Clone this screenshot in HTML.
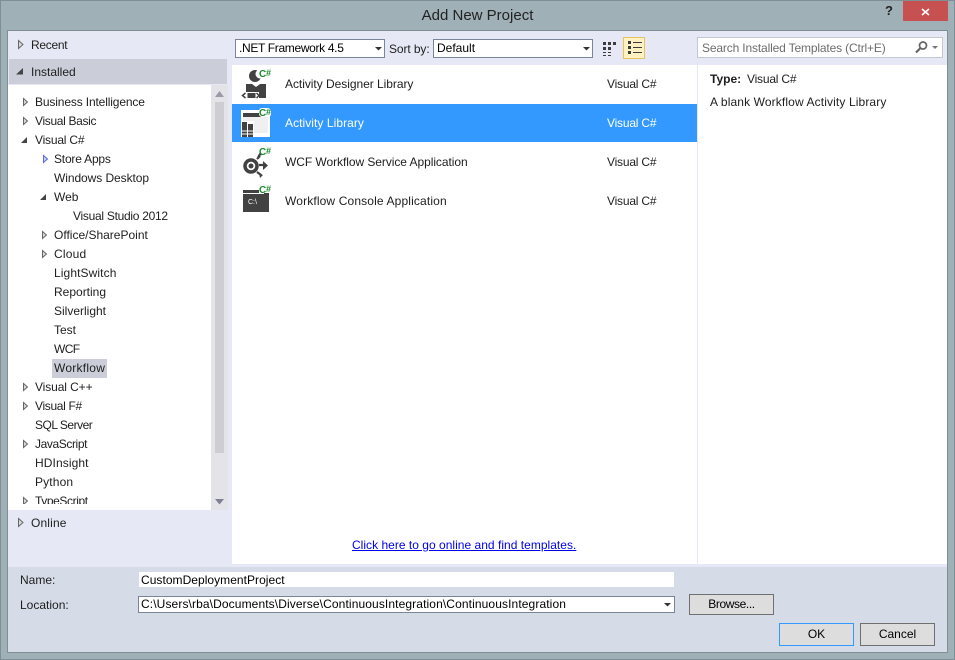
<!DOCTYPE html>
<html><head><meta charset="utf-8"><style>
html,body{margin:0;padding:0;background:#9fb0b7}
#r{position:relative;width:955px;height:660px;overflow:hidden;background:#9fb0b7;font-family:"Liberation Sans",sans-serif;font-size:12px;color:#1e1e1e}
#r div,#r svg{position:absolute}
.t{white-space:nowrap;line-height:16px;height:16px}
.box{background:#fff;border:1px solid #7b8598;box-sizing:border-box}
.btn{background:#dddddd;border:1px solid #707070;box-sizing:border-box;text-align:center;color:#000}
.g{font-family:"Liberation Sans",sans-serif;font-weight:bold;fill:#1e8a2d}
</style></head><body><div id="r">
<div style="left:0;top:0;width:955px;height:1px;background:#7f8f96"></div>
<div style="left:0;top:0;width:1px;height:660px;background:#7f8f96"></div>
<div style="left:954px;top:0;width:1px;height:660px;background:#7f8f96"></div>
<div style="left:0;top:659px;width:955px;height:1px;background:#7f8f96"></div>
<div class="t" style="left:0;width:955px;top:8px;text-align:center;font-size:15px;color:#222">Add New Project</div>
<div class="t" style="left:885px;top:3px;font-weight:bold;font-size:13px;color:#222">?</div>
<div style="left:903px;top:1px;width:45px;height:20px;background:#c75050"></div>
<svg style="left:903px;top:1px" width="45" height="20"><path d="M19 8l7 6M26 8l-7 6" stroke="#fff" stroke-width="1.600"/></svg>

<div style="left:7px;top:30px;width:941px;height:623px;background:#7f8f96"></div>
<div style="left:8px;top:31px;width:939px;height:621px;background:#e6e9f5"></div>
<div style="left:8px;top:567px;width:939px;height:85px;background:#d6dbe8"></div>

<div style="left:9px;top:59px;width:218px;height:25px;background:#cbced9"></div>
<div style="left:8px;top:85px;width:203px;height:425px;background:#fff;overflow:hidden">
<div class="t" style="left:27px;top:9px;letter-spacing:-.14px">Business Intelligence</div>
<div class="t" style="left:27px;top:28px;letter-spacing:-.33px">Visual Basic</div>
<div class="t" style="left:27px;top:47px;letter-spacing:-.2px">Visual C#</div>
<div class="t" style="left:46px;top:66px;letter-spacing:-.2px">Store Apps</div>
<div class="t" style="left:46px;top:85px;letter-spacing:-.07px">Windows Desktop</div>
<div class="t" style="left:46px;top:104px">Web</div>
<div class="t" style="left:65px;top:123px;letter-spacing:-.28px">Visual Studio 2012</div>
<div class="t" style="left:46px;top:142px">Office/SharePoint</div>
<div class="t" style="left:46px;top:161px;letter-spacing:.2px">Cloud</div>
<div class="t" style="left:46px;top:180px;letter-spacing:.1px">LightSwitch</div>
<div class="t" style="left:46px;top:199px">Reporting</div>
<div class="t" style="left:46px;top:218px">Silverlight</div>
<div class="t" style="left:46px;top:237px">Test</div>
<div class="t" style="left:46px;top:256px;letter-spacing:-.6px">WCF</div>
<div style="left:44px;top:274px;width:55px;height:19px;background:#cbced9"></div>
<div class="t" style="left:46px;top:275px;letter-spacing:.25px">Workflow</div>
<div class="t" style="left:27px;top:294px;letter-spacing:-.1px">Visual C++</div>
<div class="t" style="left:27px;top:313px;letter-spacing:-.33px">Visual F#</div>
<div class="t" style="left:27px;top:332px;letter-spacing:-.5px">SQL Server</div>
<div class="t" style="left:27px;top:351px;letter-spacing:-.4px">JavaScript</div>
<div class="t" style="left:27px;top:370px;letter-spacing:.1px">HDInsight</div>
<div class="t" style="left:27px;top:389px;letter-spacing:.15px">Python</div>
<div class="t" style="left:27px;top:408px;letter-spacing:-.4px">TypeScript</div>
</div>
<div class="t" style="left:31px;top:37px;letter-spacing:-.3px">Recent</div>
<div class="t" style="left:31px;top:64px">Installed</div>
<div class="t" style="left:31px;top:515px;letter-spacing:.15px">Online</div>

<svg style="left:0;top:0" width="232" height="535" fill="#d8d8d8" stroke="#666">
<path d="M18.500 40.500l4.500 4-4.500 4z"/>
<path d="M16 74.500l7-6.500v6.500z" fill="#444" stroke="none"/>
<path d="M18.500 518.500l4.500 4-4.500 4z"/>
<path d="M23.500 98.500l4 3.500-4 3.500z"/>
<path d="M23.500 117.500l4 3.500-4 3.500z"/>
<path d="M21 143l6-6v6z" fill="#444" stroke="none"/>
<path d="M43.500 155.500l4 3.500-4 3.500z" stroke="#5a6ad8" fill="#c8d0f8"/>
<path d="M40 200l6-6v6z" fill="#444" stroke="none"/>
<path d="M42.500 231.500l4 3.500-4 3.500z"/>
<path d="M42.500 250.500l4 3.500-4 3.500z"/>
<path d="M23.500 383.500l4 3.500-4 3.500z"/>
<path d="M23.500 402.500l4 3.500-4 3.500z"/>
<path d="M23.500 440.500l4 3.500-4 3.500z"/>
<path d="M23.500 497.500l4 3.500-4 3.500z"/>
</svg>
<div style="left:8px;top:504px;width:203px;height:6px;background:#fff"></div>

<div style="left:211px;top:85px;width:17px;height:425px;background:#e4e4e8"></div>
<div style="left:215px;top:102px;width:9px;height:351px;background:#cdcdd2"></div>
<svg style="left:211px;top:85px" width="16" height="425"><path d="M4 12l4.500-6 4.500 6z" fill="#9a9aa8"/><path d="M4 414h9l-4.500 5.500z" fill="#7f7f95"/></svg>

<div class="box" style="left:235px;top:39px;width:150px;height:19px;padding-left:3px;line-height:17px;color:#000;letter-spacing:-.33px">.NET Framework 4.5</div>
<svg style="left:375px;top:46px" width="7" height="5"><path d="M0 1h7l-3.500 3.500z" fill="#333"/></svg>
<div class="t" style="left:389px;top:41px;letter-spacing:-.1px">Sort by:</div>
<div class="box" style="left:433px;top:39px;width:160px;height:19px;padding-left:3px;line-height:17px;color:#000">Default</div>
<svg style="left:583px;top:46px" width="7" height="5"><path d="M0 1h7l-3.500 3.500z" fill="#333"/></svg>

<svg style="left:602px;top:41px" width="16" height="16">
<g fill="#3c3c3c"><rect x="1" y="1" width="3" height="3"/><rect x="6" y="1" width="3" height="3"/><rect x="11" y="1" width="3" height="3"/><rect x="1" y="6" width="3" height="3"/><rect x="6" y="6" width="3" height="3"/><rect x="1" y="11" width="3" height="1"/><rect x="6" y="11" width="3" height="1"/><rect x="1" y="14" width="3" height="1"/><rect x="6" y="14" width="3" height="1"/></g></svg>
<div style="left:623px;top:37px;width:22px;height:22px;box-sizing:border-box;background:#fff2c0;border:1px solid #e5c365"></div>
<svg style="left:626px;top:40px" width="16" height="16"><g fill="#3c3c3c"><rect x="2" y="1" width="3" height="3"/><rect x="2" y="6" width="3" height="3"/><rect x="2" y="11" width="3" height="3"/><rect x="7" y="2" width="9" height="1"/><rect x="7" y="7" width="9" height="1"/><rect x="7" y="12" width="9" height="1"/></g></svg>

<div style="left:697px;top:37px;width:246px;height:21px;box-sizing:border-box;background:#fff;border:1px solid #c3c8d4"></div>
<div class="t" style="left:702px;top:40px;color:#6d6d6d;letter-spacing:-.15px">Search Installed Templates (Ctrl+E)</div>
<svg style="left:914px;top:40px" width="26" height="15" fill="none"><circle cx="9" cy="5.500" r="3.500" stroke="#666" stroke-width="1.700"/><path d="M6.500 8L2 12.500" stroke="#666" stroke-width="2.200"/><path d="M18 6h6l-3 3z" fill="#777"/></svg>

<div style="left:232px;top:65px;width:465px;height:499px;background:#fff"></div>
<div style="left:698px;top:65px;width:249px;height:499px;background:#fff"></div>
<div style="left:232px;top:104px;width:465px;height:38px;background:#3399ff"></div>

<div class="t" style="left:285px;top:76px;letter-spacing:-.04px">Activity Designer Library</div>
<div class="t" style="left:607px;top:76px;letter-spacing:-.2px">Visual C#</div>
<div class="t" style="left:285px;top:115px;color:#fff;letter-spacing:.06px">Activity Library</div>
<div class="t" style="left:607px;top:115px;color:#fff;letter-spacing:-.2px">Visual C#</div>
<div class="t" style="left:285px;top:154px;letter-spacing:-.06px">WCF Workflow Service Application</div>
<div class="t" style="left:607px;top:154px;letter-spacing:-.2px">Visual C#</div>
<div class="t" style="left:285px;top:193px;letter-spacing:.14px">Workflow Console Application</div>
<div class="t" style="left:607px;top:193px;letter-spacing:-.2px">Visual C#</div>

<svg style="left:238px;top:66px" width="40" height="160" fill="none">
<!-- designer -->
<circle cx="17" cy="10" r="6" fill="#424242"/><circle cx="22" cy="8" r="4.500" fill="#fff"/>
<path d="M8 18h6l4 3 4-3h6v14h-7V26H8z" fill="#424242"/>
<rect x="9.500" y="27" width="8" height="5" fill="#424242"/>
<path d="M7.500 27l-3 2.500 3 2.500M18.500 27l2.500 2.500-2.500 2.500" stroke="#424242" stroke-width="1.500"/>
<text class="g" x="21" y="11" font-size="10">C</text><text class="g" x="28" y="10" font-size="9">#</text>
<!-- library -->
<rect x="3" y="44" width="29" height="27" fill="#fff"/>
<rect x="5" y="47" width="25" height="4" fill="#424242"/>
<rect x="5" y="51" width="25" height="16" fill="#f0f0f0"/>
<rect x="3" y="55" width="13" height="16" fill="#fff"/>
<rect x="4" y="56" width="5" height="15" fill="#424242"/><rect x="10" y="58" width="5" height="13" fill="#424242"/>
<path d="M4 65h5M10 65h5M4 68h5M10 68h5" stroke="#fff"/>
<rect x="21" y="42" width="12" height="9" rx="3" fill="#fff"/>
<text class="g" x="21" y="50" font-size="10">C</text><text class="g" x="28" y="49" font-size="9">#</text>
<!-- WCF -->
<circle cx="13" cy="100" r="6" stroke="#424242" stroke-width="3.500"/>
<circle cx="13" cy="100" r="2.500" fill="#424242"/>
<path d="M19 93l3-3M21 99h5M19 106l4 3" stroke="#424242" stroke-width="2.200"/>
<path d="M25 95l5 4.500-5 4.500z" fill="#424242"/><path d="M21 107l4 2-3 3z" fill="#424242"/><path d="M19 91l5-2-2-3z" fill="#424242"/>
<text class="g" x="21" y="89" font-size="10">C</text><text class="g" x="28" y="88" font-size="9">#</text>
<!-- console -->
<rect x="5" y="124" width="26" height="22" fill="#424242"/>
<path d="M5 127.500h21" stroke="#fff"/>
<text x="10" y="138" font-family="Liberation Sans,sans-serif" font-size="7" fill="#fff">C:\</text>
<rect x="21" y="120" width="12" height="7" fill="#fff"/>
<text class="g" x="21" y="127" font-size="10">C</text><text class="g" x="28" y="126" font-size="9">#</text>
</svg>

<div class="t" style="left:710px;top:71px"><b>Type:</b></div>
<div class="t" style="left:747px;top:71px;letter-spacing:-.2px">Visual C#</div>
<div class="t" style="left:710px;top:94px;letter-spacing:.12px">A blank Workflow Activity Library</div>
<div class="t" style="left:352px;top:537px;color:#0000ee;text-decoration:underline;letter-spacing:.02px">Click here to go online and find templates.</div>

<div class="t" style="left:20px;top:572px">Name:</div>
<div class="t" style="left:20px;top:597px">Location:</div>
<div style="left:139px;top:572px;width:535px;height:15px;background:#fff"></div>
<div class="t" style="left:141px;top:572px;color:#000;letter-spacing:.04px">CustomDeploymentProject</div>
<div class="box" style="left:138px;top:596px;width:537px;height:17px;padding-left:2px;line-height:15px;color:#000;letter-spacing:.11px">C:\Users\rba\Documents\Diverse\ContinuousIntegration\ContinuousIntegration</div>
<svg style="left:664px;top:602px" width="7" height="5"><path d="M0 1h7l-3.500 3.500z" fill="#333"/></svg>
<div class="btn" style="left:689px;top:594px;width:85px;height:21px;line-height:19px;letter-spacing:-.4px">Browse...</div>
<div class="btn" style="left:779px;top:623px;width:75px;height:23px;line-height:21px;border-color:#3399ff">OK</div>
<div class="btn" style="left:860px;top:623px;width:75px;height:23px;line-height:21px">Cancel</div>
</div></body></html>
